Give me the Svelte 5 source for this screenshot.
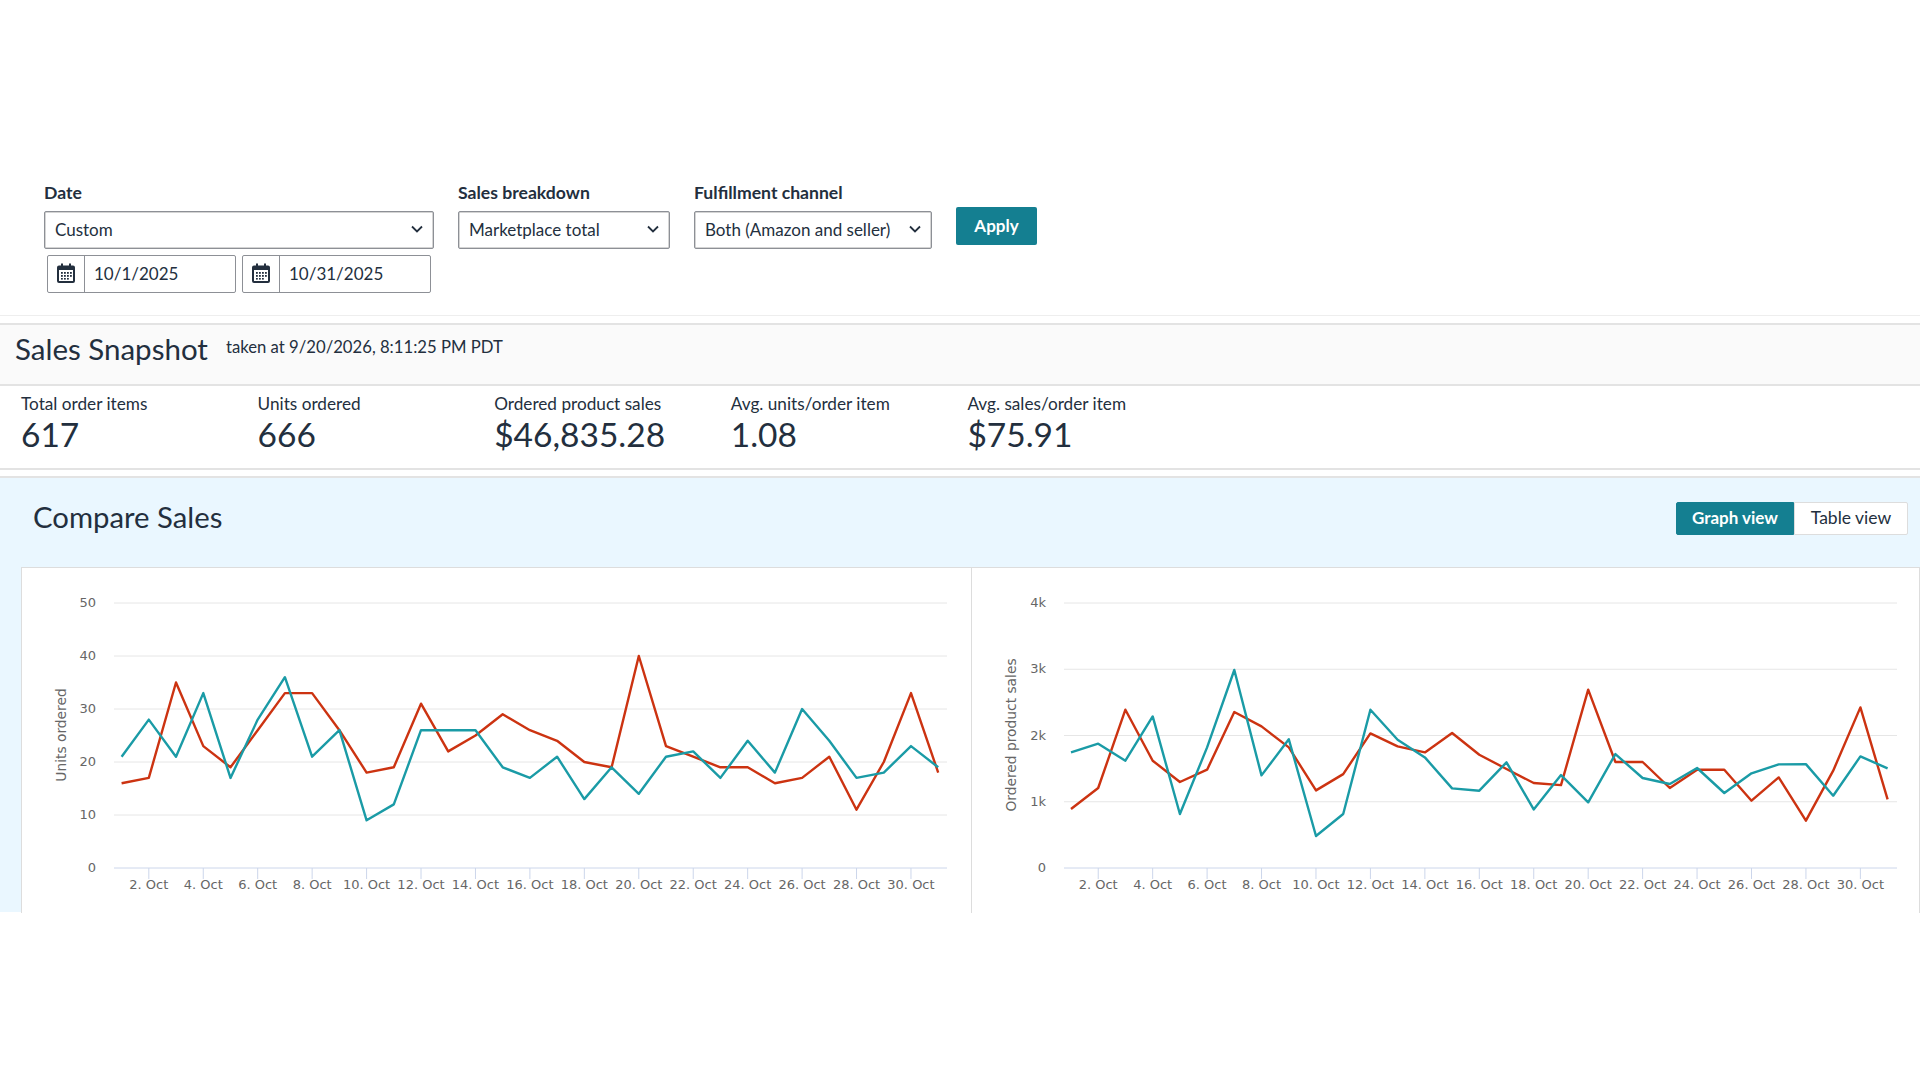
<script>
	const metrics = [
		{ label: 'Total order items', value: '617' },
		{ label: 'Units ordered', value: '666' },
		{ label: 'Ordered product sales', value: '$46,835.28' },
		{ label: 'Avg. units/order item', value: '1.08' },
		{ label: 'Avg. sales/order item', value: '$75.91' }
	];

	const days = Array.from({ length: 31 }, (_, i) => i + 1);
	const tickDays = days.filter((d) => d % 2 === 0 && d < 31);

	const charts = [
		{
			title: 'Units ordered',
			nudge: 0.6,
			max: 50,
			step: 10,
			fmt: (v) => String(v),
			red: [16, 17, 35, 23, 19, 26, 33, 33, 26, 18, 19, 31, 22, 25, 29, 26, 24, 20, 19, 40, 23, 21, 19, 19, 16, 17, 21, 11, 20, 33, 18],
			teal: [21, 28, 21, 33, 17, 28, 36, 21, 26, 9, 12, 26, 26, 26, 19, 17, 21, 13, 19, 14, 21, 22, 17, 24, 18, 30, 24, 17, 18, 23, 19]
		},
		{
			title: 'Ordered product sales',
			nudge: 0,
			max: 4000,
			step: 1000,
			fmt: (v) => (v === 0 ? '0' : v / 1000 + 'k'),
			red: [890, 1207, 2389, 1620, 1298, 1484, 2354, 2138, 1821, 1172, 1418, 2032, 1836, 1745, 2037, 1710, 1494, 1283, 1252, 2691, 1600, 1600, 1207, 1484, 1484, 1016, 1368, 714, 1469, 2424, 1036],
			teal: [1745, 1876, 1620, 2289, 815, 1821, 2988, 1398, 1942, 483, 815, 2389, 1937, 1670, 1202, 1167, 1595, 885, 1403, 991, 1720, 1358, 1268, 1509, 1132, 1429, 1564, 1569, 1092, 1685, 1504]
		}
	];

	// plot area inside each panel
	const LEFT = 92;
	const RIGHT = 925;
	const FIRST_X = 99;
	const DAY = 27.22;
	const TOP = 35;
	const BOTTOM = 300;

	function xOf(chart, d) {
		return FIRST_X + chart.nudge + (d - 1) * DAY;
	}
	function yOf(chart, v) {
		return BOTTOM - (v / chart.max) * (BOTTOM - TOP);
	}
	function line(chart, values) {
		return values.map((v, i) => `${xOf(chart, i + 1).toFixed(1)},${yOf(chart, v).toFixed(1)}`).join(' ');
	}
	function yTicks(chart) {
		const out = [];
		for (let v = 0; v <= chart.max; v += chart.step) out.push(v);
		return out;
	}
</script>

<div class="page">
	<section class="filters">
		<div class="field date-field">
			<span class="label">Date</span>
			<div class="select">
				<span>Custom</span>
				<svg class="chevron" viewBox="0 0 14 10"><polyline points="2,2.5 7,7.5 12,2.5" /></svg>
			</div>
			<div class="date-range">
				{#each ['10/1/2025', '10/31/2025'] as date}
					<div class="date-input">
						<span class="cal">
							<svg viewBox="0 0 20 22" width="20" height="22">
								<path class="cal-body" d="M3 3.5h2V1.5h2v2h6V1.5h2v2h2a2 2 0 0 1 2 2V19a2 2 0 0 1-2 2H3a2 2 0 0 1-2-2V5.5a2 2 0 0 1 2-2z" />
								<rect x="3" y="8" width="14" height="11" fill="#fff" />
								{#each [6, 9, 12, 15] as cx}
									<rect x={cx - 1} y="10" width="1.8" height="1.8" fill="#232f3e" />
									<rect x={cx - 1} y="13" width="1.8" height="1.8" fill="#232f3e" />
								{/each}
								{#each [6, 9, 12] as cx}
									<rect x={cx - 1} y="16" width="1.8" height="1.6" fill="#232f3e" />
								{/each}
							</svg>
						</span>
						<span class="date-text">{date}</span>
					</div>
				{/each}
			</div>
		</div>
		<div class="field breakdown-field">
			<span class="label">Sales breakdown</span>
			<div class="select">
				<span>Marketplace total</span>
				<svg class="chevron" viewBox="0 0 14 10"><polyline points="2,2.5 7,7.5 12,2.5" /></svg>
			</div>
		</div>
		<div class="field channel-field">
			<span class="label">Fulfillment channel</span>
			<div class="select">
				<span>Both (Amazon and seller)</span>
				<svg class="chevron" viewBox="0 0 14 10"><polyline points="2,2.5 7,7.5 12,2.5" /></svg>
			</div>
		</div>
		<button class="apply">Apply</button>
	</section>

	<div class="rule-light"></div>

	<section class="snapshot">
		<h2>Sales Snapshot</h2>
		<span class="taken">taken at 9/20/2026, 8:11:25 PM PDT</span>
	</section>

	<section class="metrics">
		{#each metrics as m}
			<div class="metric">
				<div class="metric-label">{m.label}</div>
				<div class="metric-value">{m.value}</div>
			</div>
		{/each}
	</section>

	<section class="compare">
		<div class="compare-head">
			<h2>Compare Sales</h2>
			<div class="toggle">
				<button class="on">Graph view</button>
				<button>Table view</button>
			</div>
		</div>
		<div class="panels">
			{#each charts as chart}
				<div class="panel">
					<svg class="chart" viewBox="0 0 950 346">
						{#each yTicks(chart) as v}
							{#if v > 0}
								<line class="grid" x1={LEFT} x2={RIGHT} y1={yOf(chart, v)} y2={yOf(chart, v)} />
							{/if}
							<text class="tick" x={LEFT - 18} y={yOf(chart, v) + 4} text-anchor="end">{chart.fmt(v)}</text>
						{/each}
						<line class="axis" x1={LEFT} x2={RIGHT} y1={BOTTOM} y2={BOTTOM} />
						{#each tickDays as d}
							<line class="axis" x1={xOf(chart, d)} x2={xOf(chart, d)} y1={BOTTOM} y2={BOTTOM + 11} />
							<text class="tick" x={xOf(chart, d)} y={BOTTOM + 21} text-anchor="middle">{d}. Oct</text>
						{/each}
						<text class="axis-title" text-anchor="middle" transform={`translate(${LEFT - 48} 167) rotate(-90)`}>{chart.title}</text>
						<polyline class="series red" points={line(chart, chart.red)} />
						<polyline class="series teal" points={line(chart, chart.teal)} />
					</svg>
				</div>
			{/each}
		</div>
	</section>
</div>

<style>
	:global(body) {
		margin: 0;
		background: #fff;
	}

	.page {
		height: 1080px;
		overflow: hidden;
		font-family: 'Lato', 'Liberation Sans', sans-serif;
		color: #232f3e;
	}

	.filters {
		display: flex;
		gap: 24px;
		box-sizing: border-box;
		height: 315px;
		padding: 183px 0 0 44px;
	}

	.field {
		display: flex;
		flex-direction: column;
	}

	.date-field {
		width: 390px;
	}

	.breakdown-field {
		width: 212px;
	}

	.channel-field {
		width: 238px;
	}

	.label {
		height: 28px;
		font-size: 17.6px;
		font-weight: 700;
		line-height: 20px;
	}

	.select {
		display: flex;
		align-items: center;
		justify-content: space-between;
		box-sizing: border-box;
		height: 38px;
		padding: 0 9px 2px 10px;
		border: 1px solid #8d9096;
		border-radius: 2px;
		box-shadow: inset 0 0 0 0.5px #aaa;
		font-size: 17px;
	}

	.chevron {
		width: 14px;
		height: 10px;
		margin-top: -1px;
		fill: none;
		stroke: #232f3e;
		stroke-width: 1.8;
	}

	.date-range {
		display: flex;
		gap: 6px;
		margin: 6px 0 0 3px;
	}

	.date-input {
		display: flex;
		box-sizing: border-box;
		width: 189px;
		height: 38px;
		border: 1px solid #8d9096;
		border-radius: 2px;
		font-size: 17px;
	}

	.cal {
		display: flex;
		align-items: center;
		justify-content: center;
		width: 36px;
		padding-bottom: 2px;
		border-right: 1px solid #8d9096;
	}

	.cal-body {
		fill: #232f3e;
	}

	.date-text {
		align-self: center;
		padding: 0 0 1px 9px;
	}

	.apply {
		align-self: flex-start;
		width: 81px;
		height: 38px;
		margin-top: 24px;
		padding-bottom: 3px;
		border: none;
		border-radius: 2px;
		background: #147f91;
		color: #fff;
		font: 700 17px 'Lato', sans-serif;
	}

	.rule-light {
		height: 8px;
		border-top: 1px solid #eee;
		box-sizing: border-box;
	}

	.snapshot {
		display: flex;
		align-items: flex-start;
		gap: 18px;
		box-sizing: border-box;
		height: 63px;
		padding: 6px 0 0 15px;
		border-top: 2px solid #e3e3e3;
		border-bottom: 2px solid #e3e3e3;
		background: #fafafa;
	}

	.snapshot h2 {
		margin: 0;
		font-size: 29.5px;
		font-weight: 400;
		line-height: 36px;
	}

	.taken {
		margin-top: 6px;
		font-size: 16.7px;
		line-height: 20px;
	}

	.metrics {
		display: grid;
		grid-template-columns: repeat(5, 236.6px);
		box-sizing: border-box;
		height: 84px;
		padding: 7px 0 0 21px;
		border-bottom: 2px solid #e3e3e3;
	}

	.metric-label {
		font-size: 17.2px;
		line-height: 22px;
	}

	.metric-value {
		font-size: 33.5px;
		line-height: 39px;
	}

	.compare {
		margin-top: 6px;
		padding-left: 21px;
		height: 436px;
		box-sizing: border-box;
		border-top: 2px solid #e3e3e3;
		background: #eaf7ff;
	}

	.compare-head {
		display: flex;
		align-items: center;
		justify-content: space-between;
		box-sizing: border-box;
		height: 89px;
		padding: 0 12px 12px 12px;
	}

	.compare-head h2 {
		margin: 0;
		font-size: 29.3px;
		font-weight: 400;
	}

	.toggle {
		display: flex;
		height: 33px;
		margin-top: 3px;
	}

	.toggle button {
		width: 114px;
		padding-bottom: 2px;
		border: 1px solid #ddd;
		border-radius: 0 2px 2px 0;
		background: #fff;
		color: #232f3e;
		font: 400 17.5px 'Lato', sans-serif;
	}

	.toggle button.on {
		width: 118px;
		border-color: #147f91;
		border-radius: 2px 0 0 2px;
		background: #147f91;
		color: #fff;
		font-weight: 700;
		font-size: 17px;
	}

	.panels {
		display: grid;
		grid-template-columns: 950px 949px;
		height: 345px;
		overflow: hidden;
		background: #fff;
		border-top: 1px solid #ddd;
	}

	.panel {
		overflow: hidden;
		border-left: 1px solid #ddd;
	}

	.panel:last-child {
		border-right: 1px solid #ddd;
	}

	.chart {
		display: block;
		width: 950px;
		height: 346px;
	}

	.grid {
		stroke: #e6e6e6;
		stroke-width: 1;
	}

	.axis {
		stroke: #ccd6eb;
		stroke-width: 1;
	}

	.tick {
		font: 13px 'DejaVu Sans', sans-serif;
		fill: #666;
	}

	.axis-title {
		font: 13.8px 'DejaVu Sans', sans-serif;
		fill: #666;
	}

	.series {
		fill: none;
		stroke-width: 2.4;
		stroke-linejoin: round;
	}

	.red {
		stroke: #cc3311;
	}

	.teal {
		stroke: #1a9ba6;
	}
</style>
